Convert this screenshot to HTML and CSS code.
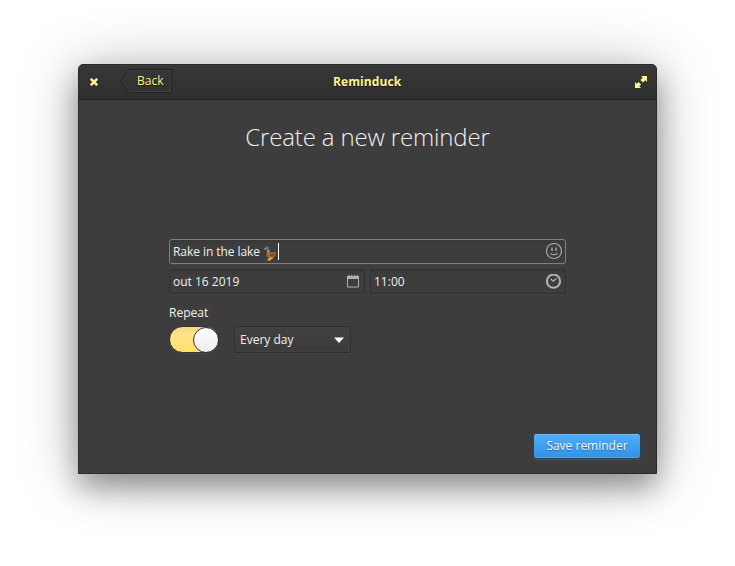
FILE: index.html
```html
<!DOCTYPE html>
<html lang="en">
<head>
<meta charset="utf-8">
<title>Reminduck</title>
<link rel="stylesheet" href="styles.css">
</head>
<body>
<main class="window">
  <header class="titlebar">
    <svg class="close" width="8" height="8" viewBox="0 0 8 8"><path d="M.8.800l6.400 6.400M7.200.800L.8 7.200" stroke="#fff394" stroke-width="2.500"/></svg>
    <div class="back">
      <svg class="back-shape" width="54" height="27" viewBox="0 0 54 27"><path d="M9.500 2.500H50.500V23.500H9.500L2 13z" fill="none" stroke="#404040"/><path d="M9 1.500H50q1.500 0 1.500 1.500V23q0 1.500-1.500 1.500H9L.6 13z" fill="none" stroke="#232323"/></svg>
      <span>Back</span>
    </div>
    <h1 class="name">Reminduck</h1>
    <svg class="expand" width="12" height="12" viewBox="0 0 12 12" fill="#fff394"><path d="M6 0h6v6L10.300 4.300 8 6.600 7 5.600 6.400 5 5.400 4 7.700 1.700zM0 12V6l1.700 1.700L3.500 5.900 6.100 8.500 4.300 10.300 6 12z"/></svg>
  </header>
  <section class="content">
    <h2 class="heading">Create a new reminder</h2>
    <div class="form">
      <div class="entry focused">
        <span class="note">Rake in the lake</span>
        <svg class="duck" width="12" height="15" viewBox="0 0 12 15"><path d="M3 5.500L5.500 5l.8 1.300 2 .3L12 5.800l-.6 4-2.400 2.500H5.500L3 10.800 2.300 8z" fill="#a2683a"/><path d="M6 8l5-.5-2 3H6.500z" fill="#75492a"/><path d="M1.200 1.200Q3.500-.6 5 1.500l.4 3-2.400 1-.4-2.200-1.500-.5z" fill="#61737c"/><path d="M0 3l1.300-1.200 1.200 1-1.200 1.200z" fill="#d39a45"/><path d="M3 5l2.400-.7.1 1L3.200 6z" fill="#c9c9c0"/><path d="M5.500 11.500l3 .2.500 1-1.800.5L6 14.800l-3.500-.9 2-1z" fill="#ffad20"/></svg>
        <i class="caret"></i>
        <svg class="icon" width="16" height="17" viewBox="0 0 16 17" fill="none" stroke="#a5a5a5"><circle cx="8" cy="8" r="7.500" stroke-width="1.200"/><path d="M6 4.500v3.500M10 4.500v3.500" stroke-width="1.500"/><path d="M4.500 10.500q3.500 2.500 7 0" stroke-width="1.200"/></svg>
      </div>
      <div class="pair">
        <div class="entry date"><span>out 16 2019</span>
          <svg class="icon" width="16" height="16" viewBox="0 0 16 16"><path d="M2.500 3.500h11v9.500h-11z" fill="none" stroke="#b0b0b0"/><path d="M2 2h12v3H2zM3.500.800h1v1.500h-1zM6.200.800h1v1.500h-1zM8.900.800h1v1.500h-1zM11.600.800h1v1.500h-1z" fill="#b0b0b0"/></svg>
        </div>
        <div class="entry time"><span>11:00</span>
          <svg class="icon" width="16" height="16" viewBox="0 0 16 16" fill="none" stroke="#b4b4b4"><circle cx="7.500" cy="7.200" r="6.600" stroke-width="2"/><path d="M4.800 5l2.500 2.300L10.500 4.500" stroke-width="1.200"/></svg>
        </div>
      </div>
      <p class="label">Repeat</p>
      <div class="repeat">
        <div class="switch"><i class="knob"></i></div>
        <div class="select"><span>Every day</span><svg width="10" height="6" viewBox="0 0 10 6"><path d="M0 .5h10L5 6z" fill="#fff"/></svg></div>
      </div>
    </div>
    <button class="save">Save reminder</button>
  </section>
</main>
</body>
</html>
```
FILE: styles.css
```css
* { box-sizing: border-box; }
body {
  margin: 0;
  height: 566px;
  padding: 64px 78px 92px;
  background: #fff;
  color: #f0f0f0;
  font: 12px/18px "Open Sans", sans-serif;
  overflow: hidden;
}
h1, h2, p { margin: 0; }
svg { display: block; flex: none; }
.window {
  display: flex;
  flex-direction: column;
  height: 410px;
  border: 1px solid #2a2a2a;
  border-radius: 5px 5px 0 0;
  background: #3d3d3d;
  box-shadow: 0 14px 28px rgba(0,0,0,.32), 0 4px 60px rgba(0,0,0,.28);
}
.titlebar {
  display: flex;
  align-items: center;
  height: 35px;
  padding: 0 9px 0 11px;
  border-bottom: 1px solid #222;
  border-radius: 4px 4px 0 0;
  background: linear-gradient(#373737, #2f2f2f);
  box-shadow: inset 0 1px #3c3c3c;
  color: #fff394;
  text-shadow: 0 1px 1px rgba(0,0,0,.5);
}
.back {
  display: grid;
  width: 54px;
  height: 27px;
  margin: -1px 0 0 22px;
}
.back-shape, .back span { grid-area: 1 / 1; }
.back span { padding: 4px 0 0 17px; }
.name {
  width: 69px;
  margin-left: 159px;
  font-size: 12px;
  font-weight: 700;
  letter-spacing: .1px;
  white-space: nowrap;
}
.expand { margin-left: auto; }
.content {
  display: flex;
  flex-direction: column;
  flex: 1;
  padding: 20px 16px 14px;
}
.heading {
  font-size: 24px;
  font-weight: 300;
  line-height: 34px;
  letter-spacing: -.15px;
  text-align: center;
}
.form {
  width: 397px;
  margin: 85px 0 0 74px;
}
.entry {
  display: flex;
  align-items: center;
  height: 25px;
  padding: 0 3px;
  border: 1px solid #303030;
  border-radius: 3px;
  background: linear-gradient(#383838, #3d3d3d 5px);
  box-shadow: 0 1px #444;
}
.focused { border-color: #91833f; }
.note { letter-spacing: -.06px; }
.duck { margin: 3px 0 0 4px; }
.caret { width: 1px; height: 17px; margin-left: 2px; background: #fff; }
.icon { margin-left: auto; }
.pair { display: flex; gap: 5px; margin-top: 5px; }
.date, .time { width: 196px; }
.label { margin-top: 10px; }
.repeat { display: flex; align-items: center; gap: 15px; margin-top: 4px; }
.switch {
  display: flex;
  justify-content: flex-end;
  width: 50px;
  height: 27px;
  border: 1px solid #38362f;
  border-radius: 14px;
  background: linear-gradient(#f4da80, #ffe388 30%, #ffe16b);
  box-shadow: 0 1px #484848;
}
.knob {
  width: 26px;
  height: 26px;
  margin: -.5px -.5px 0 0;
  border: 1px solid #333;
  border-radius: 50%;
  background: linear-gradient(#fff, #ececec);
}
.select {
  display: flex;
  align-items: center;
  justify-content: space-between;
  width: 117px;
  height: 27px;
  padding: 0 6px 0 5px;
  border: 1px solid #2d2d2d;
  border-radius: 3px;
  background: linear-gradient(#414141, #3b3b3b);
  box-shadow: inset 0 0 0 1px #424242, 0 1px #444;
}
.save {
  width: 108px;
  height: 26px;
  margin: auto -1px 0 auto;
  padding: 0;
  border: 1px solid #2b4358;
  border-radius: 3px;
  background: linear-gradient(#50adfa, #3291e4) padding-box;
  box-shadow: inset 0 1px #74befb, inset 0 -1px #47a5f2, 0 1px #505050;
  color: #f4faff;
  font: inherit;
  text-shadow: 0 1px 1px rgba(0,50,100,.5);
}
```
